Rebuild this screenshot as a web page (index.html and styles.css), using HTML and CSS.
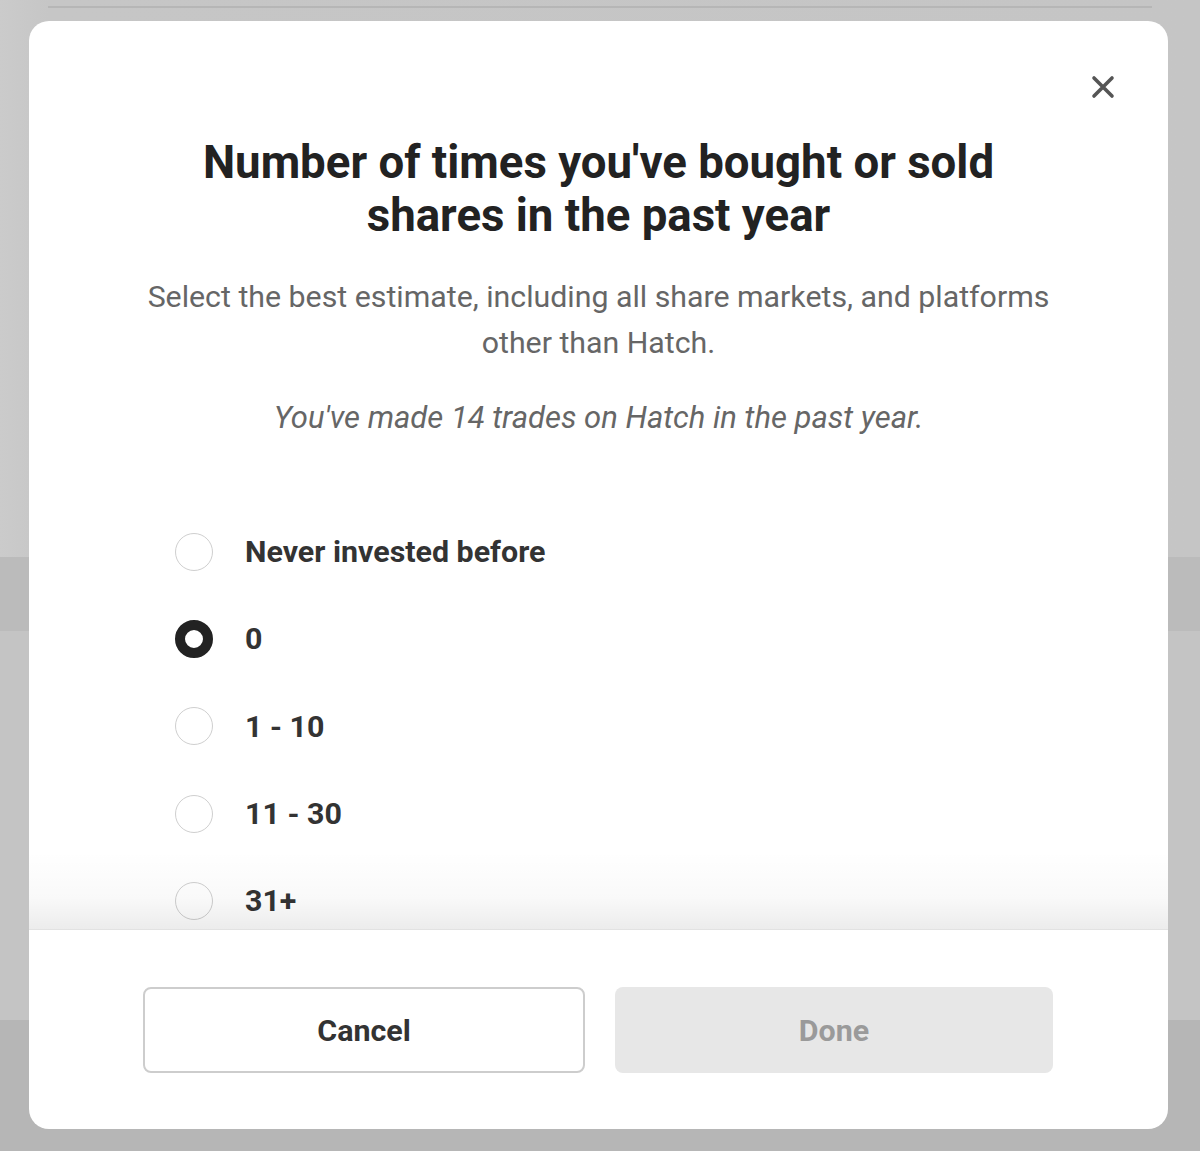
FILE: index.html
```html
<!DOCTYPE html>
<html lang="en">
<head>
<meta charset="utf-8">
<title>Trading frequency</title>
<link rel="stylesheet" href="styles.css">
</head>
<body>
  <div class="page">
    <div class="page-top"><div class="page-rule"></div></div>
    <div class="page-band"></div>
    <div class="page-mid"></div>
    <div class="page-band page-band-bottom"></div>
  </div>

  <div class="modal" role="dialog" aria-labelledby="modal-title">
    <button class="close" aria-label="Close">
      <svg width="24" height="24" viewBox="0 0 24 24" aria-hidden="true">
        <path d="M3 3 L21 21 M21 3 L3 21" stroke="#555" stroke-width="3.6" stroke-linecap="round" fill="none"/>
      </svg>
    </button>
    <div class="modal-body">
      <h1 id="modal-title" class="title">Number of times you've bought or sold<br>shares in the past year</h1>
      <p class="subtitle">Select the best estimate, including all share markets, and platforms other than Hatch.</p>
      <p class="note">You've made 14 trades on Hatch in the past year.</p>
      <ul class="options">
        <li class="option"><span class="radio"></span><span class="label">Never invested before</span></li>
        <li class="option"><span class="radio radio-checked"></span><span class="label">0</span></li>
        <li class="option"><span class="radio"></span><span class="label">1 - 10</span></li>
        <li class="option"><span class="radio"></span><span class="label">11 - 30</span></li>
        <li class="option"><span class="radio"></span><span class="label">31+</span></li>
      </ul>
      <div class="fade"></div>
    </div>
    <div class="modal-footer">
      <button class="btn btn-cancel">Cancel</button>
      <button class="btn btn-done" disabled>Done</button>
    </div>
  </div>
</body>
</html>
```

FILE: styles.css
```css
* { box-sizing: border-box; }

html, body {
  margin: 0;
  padding: 0;
}

body {
  width: 1200px;
  height: 1151px;
  overflow: hidden;
  background: #c4c4c4;
  font-family: Roboto, "Liberation Sans", Arial, sans-serif;
}

/* page behind the overlay */
.page {
  display: flex;
  flex-direction: column;
  height: 1151px;
}
.page-top {
  height: 557px;
  padding-top: 6px;
  padding-left: 48px;
  padding-right: 48px;
  background: linear-gradient(to right, #cbcbcb 0, #c6c6c6 48px, #c5c5c5 100%);
}
.page-rule {
  height: 2px;
  background: #b6b6b6;
}
.page-band {
  height: 74px;
  background: #bbbbbb;
}
.page-mid {
  height: 389px;
  background: #c4c4c4;
}
.page-band-bottom {
  flex: 1;
  background: #b6b6b6;
}

/* modal */
.modal {
  position: absolute;
  left: 29px;
  top: 21px;
  width: 1139px;
  height: 1108px;
  background: #fff;
  border-radius: 20px;
  overflow: hidden;
  display: flex;
  flex-direction: column;
}

.close {
  position: absolute;
  right: 53px;
  top: 54px;
  width: 24px;
  height: 24px;
  padding: 0;
  border: 0;
  background: none;
  cursor: pointer;
  display: flex;
}

.modal-body {
  position: relative;
  height: 908px;
  overflow: hidden;
  padding: 115px 40px 0;
  text-align: center;
}

.title {
  margin: 0;
  font-size: 45.6px;
  line-height: 53px;
  font-weight: 700;
  color: #222;
}

.subtitle {
  margin: 32px auto 0;
  width: 950px;
  font-size: 30.3px;
  line-height: 46px;
  color: #666;
}

.note {
  margin: 29px 0 0;
  font-size: 31px;
  line-height: 46px;
  font-style: italic;
  color: #666;
}

.options {
  list-style: none;
  margin: 67px 0 0;
  padding: 0 0 0 106px;
  text-align: left;
}

.option {
  height: 87.3px;
  display: flex;
  align-items: center;
  gap: 32px;
}

.radio {
  width: 38px;
  height: 38px;
  border-radius: 50%;
  border: 1.5px solid #cfcfcf;
  flex: none;
}
.radio-checked {
  border: 10.5px solid #222;
}

.label {
  font-size: 30.4px;
  font-weight: 700;
  color: #333;
}

.fade {
  position: absolute;
  left: 0;
  right: 0;
  bottom: 0;
  height: 78px;
  background: linear-gradient(to bottom, rgba(0,0,0,0) 0%, rgba(0,0,0,0.025) 60%, rgba(0,0,0,0.075) 100%);
}

.modal-footer {
  flex: 1;
  border-top: 1px solid #e2e2e2;
  padding: 57px 115px 0 114px;
  display: flex;
  gap: 30px;
}

.btn {
  flex: 1 1 0;
  min-width: 0;
  margin: 0;
  padding: 0;
  height: 86px;
  border-radius: 8px;
  font-family: Roboto, "Liberation Sans", Arial, sans-serif;
  font-size: 30.4px;
  font-weight: 700;
}
.btn-cancel {
  background: #fff;
  border: 2px solid #cdcdcd;
  color: #333;
}
.btn-done {
  background: #e7e7e7;
  border: 0;
  color: #9a9a9a;
}
```
